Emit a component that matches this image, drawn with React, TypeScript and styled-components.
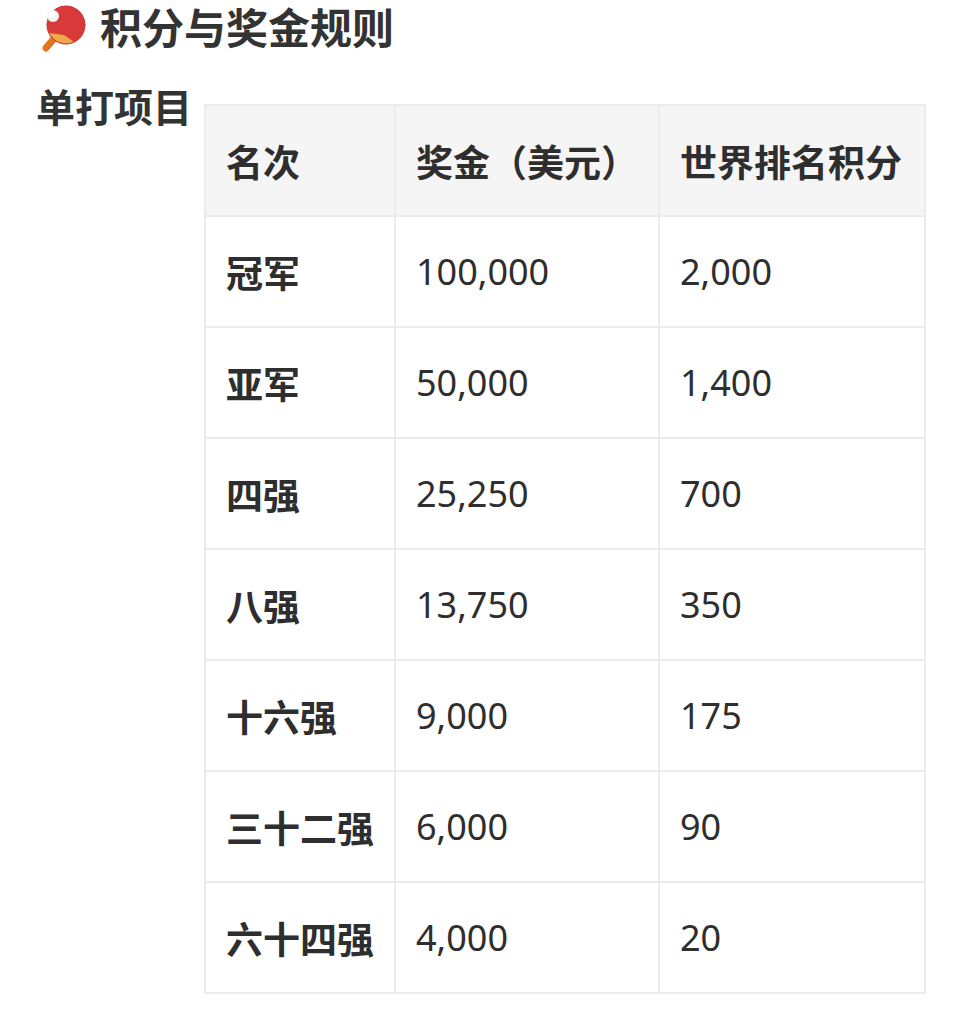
import React from 'react';
import styled, { createGlobalStyle } from 'styled-components';

const GlobalStyle = createGlobalStyle`
  body {
    margin: 0;
    background: #ffffff;
    font-family: "Noto Sans", "Noto Sans CJK SC", sans-serif;
    color: #333333;
  }
`;

const Page = styled.div`
  padding: 0 36px;
`;

const Title = styled.h2`
  margin: 0;
  display: flex;
  align-items: center;
  gap: 14px;
  height: 56px;
  padding-left: 2px;
  font-size: 42px;
  font-weight: 700;
  line-height: 56px;
  color: #333333;
`;

const Section = styled.div`
  display: flex;
  align-items: flex-start;
  gap: 12px;
  margin-top: 28px;
`;

const Label = styled.div`
  flex: 0 0 156px;
  font-size: 39px;
  font-weight: 700;
  line-height: 46px;
  white-space: nowrap;
`;

const Table = styled.table`
  margin-top: 20px;
  width: 720px;
  table-layout: fixed;
  border-collapse: collapse;
  border: 2px solid #ebebeb;
  font-size: 37px;
`;

const Cell = styled.td<{ $bold?: boolean }>`
  height: 109px;
  padding: 0 20px;
  border: 2px solid #ebebeb;
  font-size: ${(p) => (p.$bold ? '37px' : '36px')};
  font-weight: ${(p) => (p.$bold ? 700 : 400)};
  text-align: left;
  white-space: nowrap;
  color: #2e2e2e;
`;

const HeadCell = styled(Cell).attrs({ as: 'th', $bold: true })`
  background: #f5f5f5;
`;

const PaddleIcon = () => (
  <svg width="48" height="48" viewBox="0 0 48 48">
    <path d="M8 44 L19 31" stroke="#e0771f" strokeWidth="7" strokeLinecap="round" />
    <path d="M15 36 L20 28 L25 33 Z" fill="#f4a640" />
    <circle cx="28" cy="21" r="19" fill="#d83a3a" />
    <path d="M11 29 A19 19 0 0 0 36 38 L26 31 Z" fill="#f0a94a" />
    <circle cx="28" cy="21" r="19" fill="none" stroke="#c73030" strokeWidth="1" />
    <circle cx="15" cy="12" r="6" fill="#f4f4f4" />
    <circle cx="14" cy="11" r="3" fill="#ffffff" />
  </svg>
);

const rows = [
  ['冠军', '100,000', '2,000'],
  ['亚军', '50,000', '1,400'],
  ['四强', '25,250', '700'],
  ['八强', '13,750', '350'],
  ['十六强', '9,000', '175'],
  ['三十二强', '6,000', '90'],
  ['六十四强', '4,000', '20'],
];

const App: React.FC = () => {
  return (
    <Page>
      <GlobalStyle />
      <Title>
        <PaddleIcon />
        积分与奖金规则
      </Title>
      <Section>
        <Label>单打项目</Label>
        <Table>
          <colgroup>
            <col style={{ width: 190 }} />
            <col style={{ width: 264 }} />
            <col style={{ width: 266 }} />
          </colgroup>
          <thead>
            <tr>
              <HeadCell>名次</HeadCell>
              <HeadCell>奖金（美元）</HeadCell>
              <HeadCell>世界排名积分</HeadCell>
            </tr>
          </thead>
          <tbody>
            {rows.map(([rank, prize, points]) => (
              <tr key={rank}>
                <Cell $bold>{rank}</Cell>
                <Cell>{prize}</Cell>
                <Cell>{points}</Cell>
              </tr>
            ))}
          </tbody>
        </Table>
      </Section>
    </Page>
  );
};

export default App;
